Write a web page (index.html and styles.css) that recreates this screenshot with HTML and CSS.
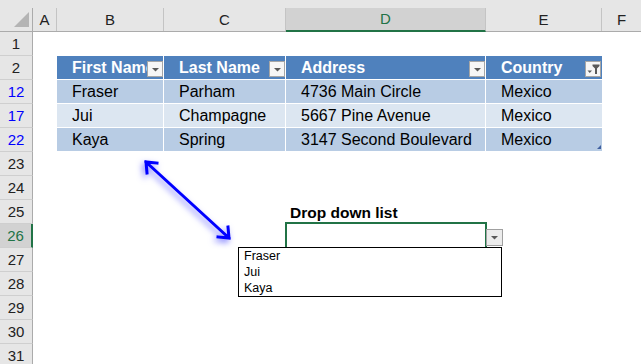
FILE: index.html
```html
<!DOCTYPE html>
<html lang="en">
<head>
    <meta charset="UTF-8">
    <title>Drop down list</title>
    <link rel="stylesheet" href="styles.css">
</head>
<body>
<div class="sheet">
    <div class="topstrip"></div>

    <div class="colheads">
        <div class="corner"><span class="corner-tri"></span></div>
        <div class="colhead c-a">A</div>
        <div class="colhead c-b">B</div>
        <div class="colhead c-c">C</div>
        <div class="colhead c-d selected">D</div>
        <div class="colhead c-e">E</div>
        <div class="colhead c-f">F</div>
    </div>

    <div class="row">
        <div class="rowhead">1</div>
    </div>

    <div class="row">
        <div class="rowhead">2</div>
        <div class="cell c-a"></div>
        <div class="cell c-b tcell th"><span class="txt">First Name</span><span class="fbtn"><svg width="9" height="5" viewBox="0 0 9 5"><path d="M1 1h7l-3.5 3.5z" fill="#595959"/></svg></span></div>
        <div class="cell c-c tcell th"><span class="txt">Last Name</span><span class="fbtn"><svg width="9" height="5" viewBox="0 0 9 5"><path d="M1 1h7l-3.5 3.5z" fill="#595959"/></svg></span></div>
        <div class="cell c-d tcell th"><span class="txt">Address</span><span class="fbtn"><svg width="9" height="5" viewBox="0 0 9 5"><path d="M1 1h7l-3.5 3.5z" fill="#595959"/></svg></span></div>
        <div class="cell c-e tcell th last"><span class="txt">Country</span><span class="fbtn"><svg width="13" height="10" viewBox="0 0 13 10"><path d="M0.5 6.5h4.5l-2.25 2.5z" fill="#595959"/><path d="M5.5 0.5h7v1.5l-2.5 2.5v5.5h-2v-5.5l-2.5-2.5z" fill="#595959"/></svg></span></div>
    </div>

    <div class="row">
        <div class="rowhead filtered">12</div>
        <div class="cell c-a"></div>
        <div class="cell c-b tcell odd"><span class="txt">Fraser</span></div>
        <div class="cell c-c tcell odd"><span class="txt">Parham</span></div>
        <div class="cell c-d tcell odd"><span class="txt">4736 Main Circle</span></div>
        <div class="cell c-e tcell odd last"><span class="txt">Mexico</span></div>
    </div>

    <div class="row">
        <div class="rowhead filtered">17</div>
        <div class="cell c-a"></div>
        <div class="cell c-b tcell even"><span class="txt">Jui</span></div>
        <div class="cell c-c tcell even"><span class="txt">Champagne</span></div>
        <div class="cell c-d tcell even"><span class="txt">5667 Pine Avenue</span></div>
        <div class="cell c-e tcell even last"><span class="txt">Mexico</span></div>
    </div>

    <div class="row">
        <div class="rowhead filtered">22</div>
        <div class="cell c-a"></div>
        <div class="cell c-b tcell odd"><span class="txt">Kaya</span></div>
        <div class="cell c-c tcell odd"><span class="txt">Spring</span></div>
        <div class="cell c-d tcell odd"><span class="txt">3147 Second Boulevard</span></div>
        <div class="cell c-e tcell odd last table-end"><span class="txt">Mexico</span></div>
    </div>

    <div class="row"><div class="rowhead">23</div></div>
    <div class="row"><div class="rowhead">24</div></div>

    <div class="row">
        <div class="rowhead">25</div>
        <div class="cell c-a"></div>
        <div class="cell c-b"></div>
        <div class="cell c-c"></div>
        <div class="cell c-d label">Drop down list</div>
    </div>

    <div class="row">
        <div class="rowhead active">26</div>
        <div class="cell c-a"></div>
        <div class="cell c-b"></div>
        <div class="cell c-c"></div>
        <div class="cell c-d active-cell">
            <span class="dd-btn"><svg width="9" height="5" viewBox="0 0 9 5"><path d="M1 1h7l-3.5 3.5z" fill="#595959"/></svg></span>
            <ul class="dd-list">
                <li>Fraser</li>
                <li>Jui</li>
                <li>Kaya</li>
            </ul>
        </div>
    </div>

    <div class="row"><div class="rowhead">27</div></div>
    <div class="row"><div class="rowhead">28</div></div>
    <div class="row"><div class="rowhead">29</div></div>
    <div class="row"><div class="rowhead">30</div></div>
    <div class="row"><div class="rowhead">31</div></div>

    <!-- arrow pointing from the table to the list -->
    <svg class="arrow" width="120" height="110" viewBox="0 0 120 110">
        <path d="M16 12L99 88M27 13L16 12L17 23M88 87L99 88L98 77" fill="none" stroke="#0000ff" stroke-width="3" stroke-linecap="square"/>
    </svg>
</div>
</body>
</html>
```

FILE: styles.css
```css
body {
    margin: 0;
    background-color: white;
    font-family: "Liberation Sans", Arial, sans-serif;
    overflow: hidden;
}
.sheet {
    position: relative;
    width: 641px;
    height: 364px;
    overflow: hidden;
}
.topstrip {
    height: 8px;
    background-color: #e6e6e6;
}
.colheads {
    display: flex;
    height: 24px;
    background-color: #e6e6e6;
    border-bottom: 1px solid #ababab;
    box-sizing: border-box;
}
.corner {
    position: relative;
    width: 33px;
    flex: none;
    border-right: 1px solid #ababab;
    box-sizing: border-box;
}
.corner-tri {
    position: absolute;
    right: 3px;
    bottom: 4px;
    width: 15px;
    height: 15px;
    background-color: #b4b4b4;
    clip-path: polygon(100% 0, 100% 100%, 0 100%);
}
.colhead {
    flex: none;
    border-right: 1px solid #c4c4c4;
    box-sizing: border-box;
    text-align: center;
    font-size: 15px;
    line-height: 23px;
    color: #222;
}
.colhead.selected {
    background-color: #d2d2d2;
    color: #217346;
    border-bottom: 2px solid #217346;
    line-height: 21px;
    height: 24px;
}
.c-a { width: 24px; flex: none; }
.c-b { width: 107px; flex: none; }
.c-c { width: 122px; flex: none; }
.c-d { width: 200px; flex: none; }
.c-e { width: 116px; flex: none; }
.c-f { flex: 1; border-right: none; }

.row {
    display: flex;
    height: 24px;
}
.rowhead {
    width: 33px;
    flex: none;
    background-color: #e6e6e6;
    border-right: 1px solid #ababab;
    border-bottom: 1px solid #cfcfcf;
    box-sizing: border-box;
    text-align: center;
    font-size: 15px;
    line-height: 23px;
    color: #222;
}
.rowhead.filtered {
    color: #0000ff;
}
.rowhead.active {
    background-color: #d2d2d2;
    color: #217346;
    border-right: 2px solid #217346;
}
.cell {
    height: 24px;
    box-sizing: border-box;
    font-size: 16px;
    line-height: 24px;
    color: #000;
}
.tcell {
    display: flex;
    align-items: flex-end;
    padding-left: 15px;
    border-right: 1px solid white;
    border-bottom: 1px solid white;
}
.tcell.last {
    border-right: none;
}
.tcell .txt {
    flex: 1;
    min-width: 0;
    white-space: nowrap;
    align-self: stretch;
}
.th {
    background-color: #4f81bd;
    color: white;
    font-weight: bold;
}
.odd {
    background-color: #b8cce4;
}
.even {
    background-color: #dce6f1;
}
/* the filter button sits over the end of a long header */
.fbtn {
    position: relative;
    z-index: 1;
    flex: none;
    display: flex;
    align-items: center;
    justify-content: center;
    width: 16px;
    height: 16px;
    margin-bottom: 2px;
    background-color: #f6f6f6;
    border: 1px solid #a6a6a6;
    box-sizing: border-box;
}
.th.last .fbtn {
    margin-right: 1px;
}
.table-end {
    position: relative;
}
.table-end::after {
    content: "";
    position: absolute;
    right: 1px;
    bottom: 2px;
    width: 4px;
    height: 4px;
    background-color: #3f5f9f;
    clip-path: polygon(100% 0, 100% 100%, 0 100%);
}
.label {
    padding-left: 4px;
    font-size: 15.5px;
    font-weight: bold;
    line-height: 25px;
}
.active-cell {
    position: relative;
}
.active-cell::before {
    content: "";
    position: absolute;
    top: -2px;
    left: -1px;
    right: -1px;
    bottom: -1px;
    border: 2px solid #217346;
}
.dd-btn {
    position: absolute;
    left: 200px;
    top: 5px;
    width: 17px;
    height: 17px;
    display: flex;
    align-items: center;
    justify-content: center;
    background-color: #ececec;
    border: 1px solid #a0a0a0;
    box-sizing: border-box;
}
.dd-list {
    position: absolute;
    left: -48px;
    top: 23px;
    width: 264px;
    height: 50px;
    margin: 0;
    padding: 0 0 0 5px;
    list-style: none;
    background-color: white;
    border: 1px solid #000;
    box-sizing: border-box;
    font-size: 12.5px;
    line-height: 16px;
}
.arrow {
    position: absolute;
    left: 130px;
    top: 150px;
    filter: drop-shadow(-2px 3px 3px rgba(40, 40, 255, 0.6));
}
```
